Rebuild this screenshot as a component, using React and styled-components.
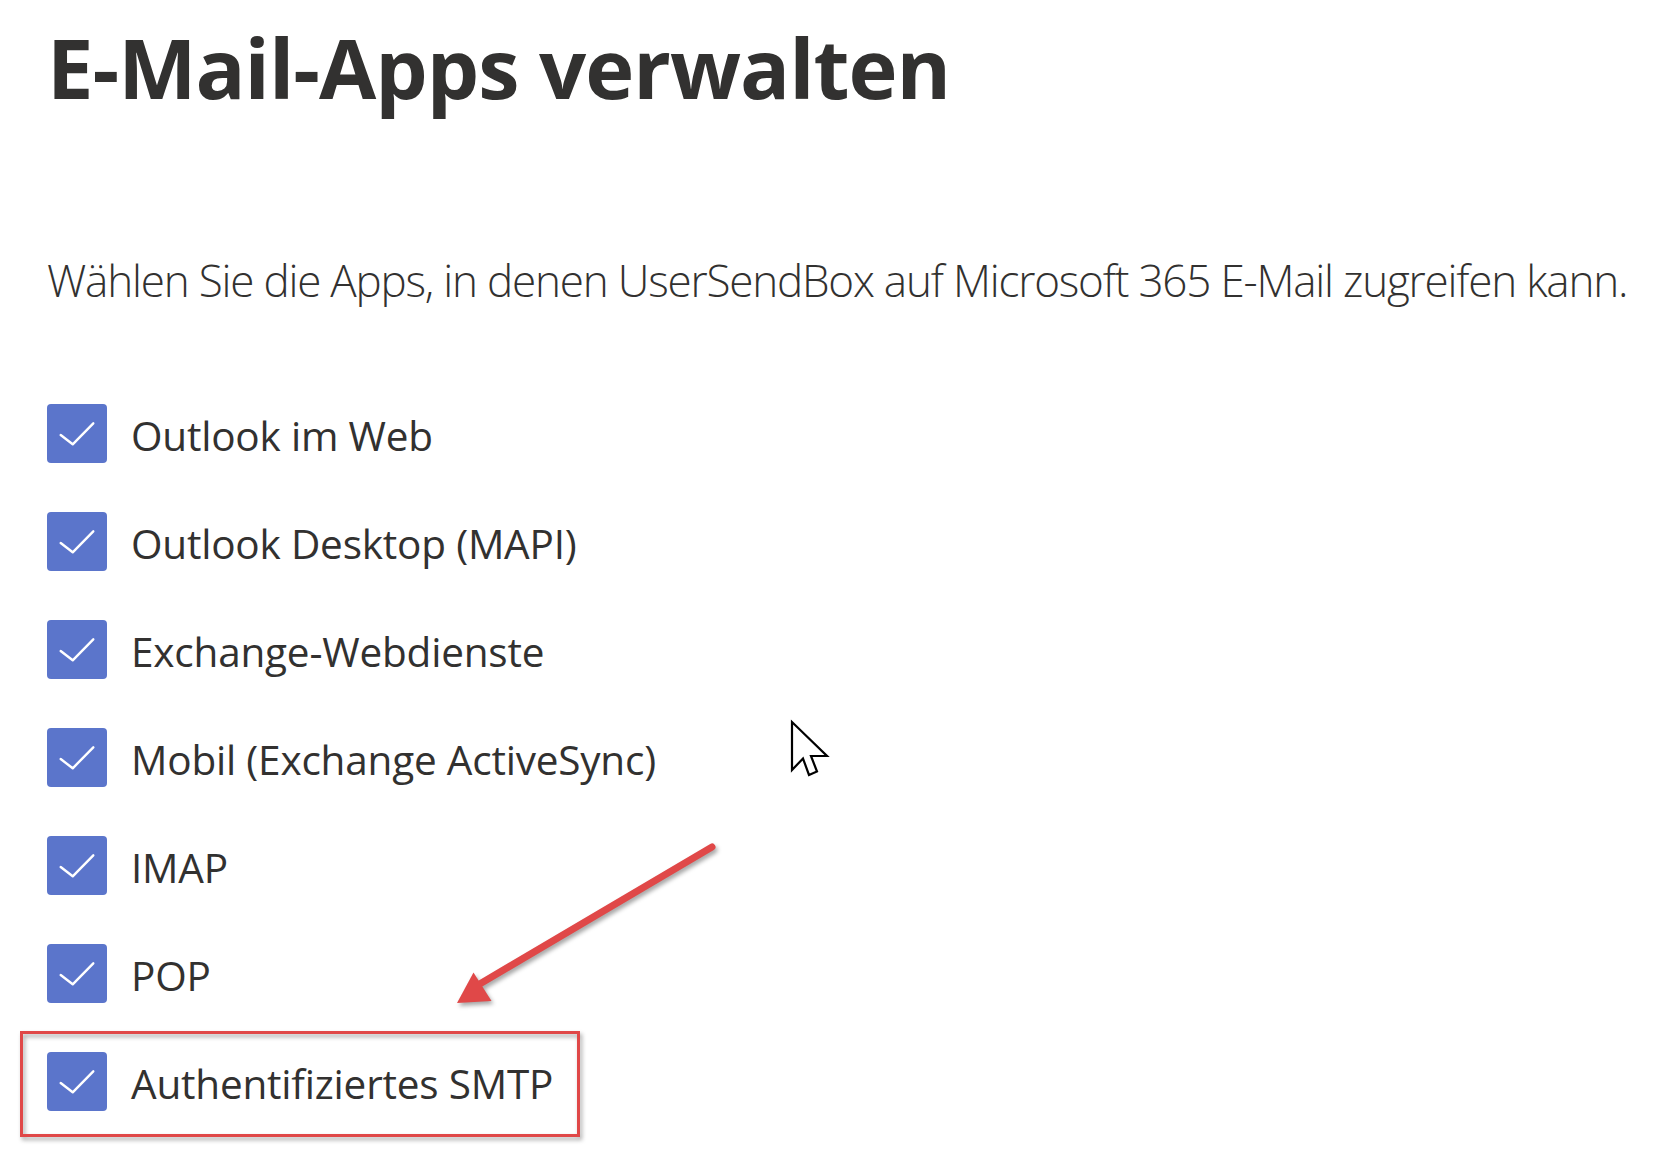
import React from "react";
import styled, { createGlobalStyle } from "styled-components";

const GlobalStyle = createGlobalStyle`
  html, body {
    margin: 0;
    padding: 0;
    background: #ffffff;
  }
  body {
    font-family: "Open Sans", "Noto Sans", sans-serif;
    color: #323130;
  }
`;

const Page = styled.main`
  position: relative;
  width: 1659px;
  height: 1173px;
  box-sizing: border-box;
  padding: 17px 0 0 47px;
  overflow: hidden;
`;

const Title = styled.h1`
  margin: 0;
  font-size: 83px;
  font-weight: 700;
  line-height: 100px;
  letter-spacing: -1px;
  color: #323130;
`;

const Subtitle = styled.p`
  margin: 133px 0 0;
  font-size: 44px;
  font-weight: 300;
  line-height: 60px;
  letter-spacing: -1.2px;
  color: #323130;
  white-space: nowrap;
`;

const List = styled.ul`
  list-style: none;
  margin: 94px 0 0;
  padding: 0;
  display: flex;
  flex-direction: column;
  gap: 49px;
`;

const Row = styled.li`
  position: relative;
  display: flex;
  align-items: center;
  gap: 24px;
  height: 59px;
`;

const Box = styled.span`
  flex: none;
  width: 60px;
  height: 59px;
  border-radius: 4px;
  background: #5b75cb;
  display: flex;
  align-items: center;
  justify-content: center;
`;

const Label = styled.span`
  font-size: 40.5px;
  font-weight: 400;
  line-height: 59px;
  letter-spacing: -0.2px;
  padding-top: 3px;
  color: #323130;
  white-space: nowrap;
`;

const Highlight = styled.div`
  position: absolute;
  left: -27px;
  top: -21px;
  width: 560px;
  height: 106px;
  box-sizing: border-box;
  border: 3px solid #e04848;
  filter: drop-shadow(2px 3px 2px rgba(0, 0, 0, 0.35));
  pointer-events: none;
`;

const ArrowOverlay = styled.svg`
  position: absolute;
  left: 440px;
  top: 830px;
  width: 290px;
  height: 190px;
  overflow: visible;
  filter: drop-shadow(2px 3px 2px rgba(0, 0, 0, 0.35));
  pointer-events: none;
`;

const Cursor = styled.svg`
  position: absolute;
  left: 790px;
  top: 720px;
  width: 40px;
  height: 60px;
  overflow: visible;
  pointer-events: none;
`;

const Check = () => (
  <svg width="60" height="59" viewBox="0 0 60 59">
    <polyline
      points="13.7,31 25.7,40.3 46.3,19.3"
      fill="none"
      stroke="#ffffff"
      strokeWidth="2.4"
      strokeLinecap="round"
      strokeLinejoin="round"
    />
  </svg>
);

const apps = [
  "Outlook im Web",
  "Outlook Desktop (MAPI)",
  "Exchange-Webdienste",
  "Mobil (Exchange ActiveSync)",
  "IMAP",
  "POP",
  "Authentifiziertes SMTP",
];

export default function App() {
  return (
    <>
      <GlobalStyle />
      <Page>
        <Title>E-Mail-Apps verwalten</Title>
        <Subtitle>
          Wählen Sie die Apps, in denen UserSendBox auf Microsoft 365 E-Mail zugreifen kann.
        </Subtitle>
        <List>
          {apps.map((name, i) => (
            <Row key={name}>
              <Box>
                <Check />
              </Box>
              <Label>{name}</Label>
              {i === apps.length - 1 && <Highlight />}
            </Row>
          ))}
        </List>

        <ArrowOverlay viewBox="440 830 290 190">
          <line
            x1="712"
            y1="847"
            x2="478"
            y2="985"
            stroke="#e04848"
            strokeWidth="7"
            strokeLinecap="round"
          />
          <polygon points="457,1003 473.5,972.5 491.5,1001" fill="#e04848" />
        </ArrowOverlay>

        <Cursor viewBox="0 0 40 60">
          <path
            d="M2 2 L2 50 L13 38.5 L19 55 L27 51.5 L21 36 L37 36 Z"
            fill="#ffffff"
            stroke="#000000"
            strokeWidth="2.2"
            strokeLinejoin="miter"
          />
        </Cursor>
      </Page>
    </>
  );
}
